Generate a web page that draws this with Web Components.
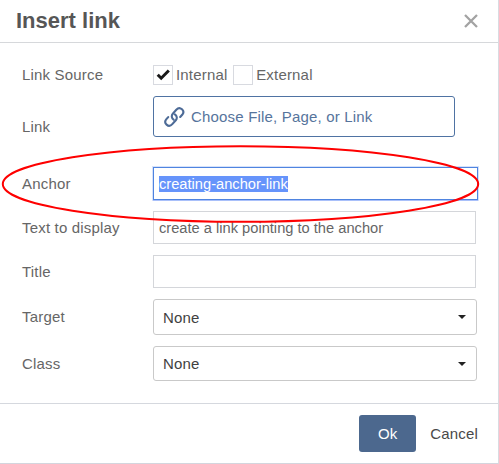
<!DOCTYPE html>
<html lang="en">
<head>
<meta charset="utf-8">
<title>Insert link</title>
<style>
  html, body { margin: 0; height: 100%; background: #fff; overflow: hidden; }
  body { font-family: "Liberation Sans", Arial, sans-serif; font-size: 15px; letter-spacing: .18px; color: #666; }
</style>
</head>
<body>
<link-dialog heading="Insert link">
  <form-row label="Link Source">
    <check-box label="Internal" checked></check-box>
    <check-box label="External"></check-box>
  </form-row>
  <form-row label="Link" style="--shift:21px"><picker-button>Choose File, Page, or Link</picker-button></form-row>
  <form-row label="Anchor" style="margin-top:19px"><text-field active>creating-anchor-link</text-field></form-row>
  <form-row label="Text to display"><text-field>create a link pointing to the anchor</text-field></form-row>
  <form-row label="Title"><text-field></text-field></form-row>
  <form-row label="Target"><select-box style="height:36px">None</select-box></form-row>
  <form-row label="Class"><select-box style="height:35px">None</select-box></form-row>
  <action-button slot="actions" primary>Ok</action-button>
  <action-button slot="actions">Cancel</action-button>
</link-dialog>
<highlight-ring></highlight-ring>

<script>
const define = (name, render) => customElements.define(name, class extends HTMLElement {
  connectedCallback() {
    if (!this.shadowRoot) this.attachShadow({ mode: 'open' }).innerHTML =
      '<style>*{box-sizing:border-box}</style>' + render(this);
  }
});

define('link-dialog', el => `
<style>
  :host { box-sizing: border-box; display: grid; grid-template-rows: 43px 1fr 60px; width: 499px; height: 464px;
          border-right: 1px solid #d9dbe1; border-bottom: 1px solid #d3d5dd; background: #fff; }
  header { display: flex; align-items: center; justify-content: space-between; border-bottom: 1px solid #d6d8db; padding: 0 19px 0 16px; }
  h1 { margin: 0; font-size: 22px; line-height: 26px; letter-spacing: 0; color: #565656; }
  main { display: flex; flex-direction: column; gap: 11px; padding: 22px 0 0 22px; }
  footer { display: flex; align-items: center; justify-content: flex-end; gap: 14px; border-top: 1px solid #d5d8de; padding: 0 20px 0 0; }
</style>
<header><h1>${el.getAttribute('heading')}</h1>
<svg width="16" height="16" viewBox="0 0 16 16"><path d="M2 2 14 14M14 2 2 14" stroke="#a3a3a3" stroke-width="2.3"/></svg></header>
<main><slot></slot></main>
<footer><slot name="actions"></slot></footer>`);

define('form-row', el => `
<style>
  :host { display: grid; grid-template-columns: 131px 1fr; align-items: center; }
  label { padding-top: var(--shift, 0); line-height: 18px; }
  div { display: flex; gap: 5.7px; }
</style>
<label>${el.getAttribute('label')}</label><div><slot></slot></div>`);

define('check-box', el => `
<style>
  :host { display: flex; align-items: center; gap: 3px; height: 20px; }
  i { display: block; width: 20px; height: 20px; border: 1px solid #d8dae0; }
  span { line-height: 18px; padding-bottom: 1px; }
  svg { display: block; }
</style>
<i>${el.hasAttribute('checked') ? '<svg width="18" height="18" viewBox="0 0 18 18"><path d="M3.7 8.7 7.2 12.2 14.8 4.5" fill="none" stroke="#191919" stroke-width="3"/></svg>' : ''}</i><span>${el.getAttribute('label')}</span>`);

define('picker-button', () => `
<style>
  :host { box-sizing: border-box; display: flex; align-items: center; gap: 6px; width: 302px; height: 41px; padding-left: 10px;
          border: 1px solid #4f73a3; border-radius: 3px; color: #56749c; }
</style>
<svg width="21" height="20" viewBox="0 0 21 20" fill="none" stroke="#4d6b97" stroke-width="2.1" stroke-linecap="round">
<path d="M9.6 12.6C7.6 11.2 7.2 8.6 8.8 6.8L12.3 2.8C14 .9 16.3.8 18 2.3C19.7 3.8 19.7 6 18.2 7.8L16.2 10"/>
<path d="M10.9 7.4C13 8.8 13.4 11.4 11.8 13.2L8.3 17.1C6.6 19 4.3 19.1 2.6 17.6C.9 16.1.9 13.9 2.4 12.1L4.2 10.1"/></svg>
<span><slot></slot></span>`);

define('text-field', () => `
<style>
  :host { box-sizing: border-box; display: flex; align-items: center; width: 323px; height: 33px; padding: 0 5px; border: 1px solid #d4d6da;
          font-size: 14.67px; letter-spacing: 0; }
  :host([active]) { width: 325px; border-color: #4f84e0; box-shadow: 0 1px 0 #a9c0fa, 0 0 0 1px rgba(90, 140, 235, .25); }
  :host([active]) span { background: #6694fb; color: #fff; line-height: 16px; }
</style>
<span><slot></slot></span>`);

define('select-box', () => `
<style>
  :host { box-sizing: border-box; display: flex; align-items: center; justify-content: space-between; width: 324px; padding: 0 10px 0 9px;
          border: 1px solid #c9c9c9; border-radius: 3px; color: #414141; }
</style>
<span><slot></slot></span><svg width="8" height="4" viewBox="0 0 8 4"><path d="M0 0H8L4 4Z" fill="#222"/></svg>`);

define('action-button', () => `
<style>
  :host { display: flex; align-items: center; justify-content: center; height: 37px; color: #494949; }
  :host([primary]) { width: 57px; border-radius: 3px; background: #4c688e; color: #fff; }
</style>
<slot></slot>`);

define('highlight-ring', () => `
<style>:host { position: absolute; left: 0; top: 143px; pointer-events: none; } svg { display: block; }</style>
<svg width="482" height="82"><ellipse cx="240.5" cy="41" rx="237.7" ry="37.8" fill="none" stroke="#fe0000" stroke-width="2"/></svg>`);
</script>
</body>
</html>
